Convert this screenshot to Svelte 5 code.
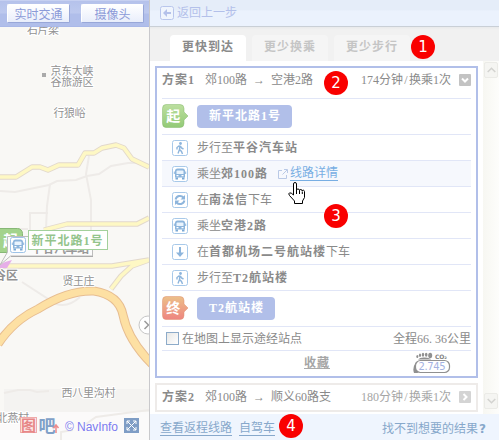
<script>
  const tabs = ['更快到达', '更少换乘', '更少步行'];
  const steps = [
    { icon: 'walk', pre: '步行至', name: '平谷汽车站', post: '' },
    { icon: 'bus', pre: '乘坐', name: '郊100路', post: '', link: '线路详情' },
    { icon: 'change', pre: '在', name: '南法信', post: '下车' },
    { icon: 'bus', pre: '乘坐', name: '空港2路', post: '' },
    { icon: 'down', pre: '在', name: '首都机场二号航站楼', post: '下车' },
    { icon: 'walk', pre: '步行至', name: 'T2航站楼', post: '' }
  ];
  const notes = [
    { n: 1, x: 411, y: 35 },
    { n: 2, x: 324, y: 71 },
    { n: 3, x: 324, y: 204 },
    { n: 4, x: 279, y: 414 }
  ];
</script>

{#snippet bus()}
  <path d="M3 11.500V5q0-2.500 2.500-2.500h5Q13 2.500 13 5v6.500z" fill="#8db5dc" />
  <path d="M4.500 8V5.500q0-1 1-1h5q1 0 1 1V8z" fill="#eaf4fd" />
  <path d="M4.500 9h2v1.300h-2zM9.500 9h2v1.300h-2z" fill="#fff" />
  <path d="M2.300 5.500V8M13.700 5.500V8" stroke="#8db5dc" />
  <path d="M3.500 11.500h2.500v2H3.500zM10 11.500h2.500v2H10z" fill="#7ba9d6" />
{/snippet}

{#snippet badge(label, id, top, bottom, edge)}
  <svg class="badge" width="27" height="24" viewBox="0 0 27 24">
    <defs>
      <linearGradient id={id} x1="0" y1="0" x2="0" y2="1">
        <stop offset="0" stop-color={top} />
        <stop offset="1" stop-color={bottom} />
      </linearGradient>
    </defs>
    <path d="M4 .5h14q4 0 4 4v3.500l4 4-4 4v3.500q0 4-4 4H4q-3.500 0-3.500-4v-15q0-4 3.500-4z" fill="url(#{id})" stroke={edge} stroke-opacity=".5" />
    <text x="11.300" y="17" text-anchor="middle" font-size="14" font-weight="700" fill="#fff">{label}</text>
  </svg>
{/snippet}

<div class="app">
  <section class="left">
    <div class="toolbar">
      <button>实时交通</button>
      <button>摄像头</button>
    </div>
    <svg class="map" width="149" height="413" viewBox="0 27 149 413">
      <rect y="27" width="149" height="413" fill="#f9f8f5" />
      <path d="M4 389h145v23H4z" fill="#f4f3f1" />
      <path d="M0 412h149v28H0z" fill="#fbfafa" />
      <g fill="none" stroke="#eeebe8" stroke-width="2">
        <path d="M0 191l15 1 34-7 8-4 19-1 11-4 12-2 12-8 17-3h8l13 2" />
        <path d="M50 184l-3 22-1 23M89 156l-3 18 5 26v30M30 230v-17h18M0 229h28M22 282l34 22q12 4 24-7" />
        <path d="M4 393l14-3h12l7 2 12-1M61 440v-8l12-2M86 424l10-7 53-7" />
      </g>
      <g fill="none" stroke-linejoin="round">
        <path d="M0 177h16l16-10h8l8 3 11-5h19l7-12h9l8-5 14-3 8 3 8 11 17 8M44 230l23-6h70l12-6M0 266h112l37-6M111 289l10-13 11-10 17-6" stroke="#e2d8cc" stroke-width="5.400" />
        <path d="M0 177h16l16-10h8l8 3 11-5h19l7-12h9l8-5 14-3 8 3 8 11 17 8M44 230l23-6h70l12-6M0 266h112l37-6M111 289l10-13 11-10 17-6" stroke="#fef8c4" stroke-width="3.600" />
        <path d="M-2 344Q14 320 38 309Q68 290 94 291Q119 295 123 315Q128 340 152 364" stroke="#e7bd91" stroke-width="9" />
        <path d="M-2 344Q14 320 38 309Q68 290 94 291Q119 295 123 315Q128 340 152 364" stroke="#fde0a3" stroke-width="7" />
      </g>
      <g class="place">
        <text x="27" y="33.500" textLength="32">石片梁</text>
        <text x="50.500" y="75" textLength="43">京东大峡</text>
        <text x="50.500" y="86" textLength="43">谷旅游区</text>
        <text x="53.500" y="117" textLength="32">行狼峪</text>
        <text x="62.500" y="284.500" textLength="32">贤王庄</text>
        <text x="61.500" y="396.500" textLength="54">西八里沟村</text>
        <text x="-3" y="422" textLength="32">北燕村</text>
        <text x="-6" y="280" font-size="12" font-weight="700" textLength="24">谷区</text>
      </g>
      <rect x="42" y="73" width="4" height="4" fill="#aaa" />
      <rect x="-9.500" y="228.500" width="32" height="24" rx="5" fill="#a3d38c" stroke="#87b876" />
      <text x="3" y="246" font-size="15" font-weight="700" fill="#fff">起</text>
      <path d="M0 265l5-3 7-2-5 8H0z" fill="#e6aee8" />
      <path d="M7.500 236.500h85v19.500h-82L0 265l7.500-13z" fill="#fbfbfb" stroke="#bdbdbd" />
      <path d="M11 256.500h82" stroke="#aaa" />
      <text x="31" y="253" font-size="12" font-weight="700" fill="#999" textLength="58">平谷汽车站</text>
      <rect x="10.500" y="237.500" width="15" height="15" rx="2" fill="#fff" stroke="#9ec3e7" />
      <g transform="translate(10 237)">{@render bus()}</g>
      <rect x="28.500" y="230.500" width="79" height="19" fill="#fff" stroke="#a3d09c" />
      <text x="31.500" y="244.500" font-size="12" font-weight="700" fill="#94c48c" textLength="71">新平北路1号</text>
      <circle cx="148" cy="325" r="9" fill="#fff" stroke="#c6c6c6" />
      <path d="M144.500 321l4 4-4 4" fill="none" stroke="#999" stroke-width="1.500" />
      <rect x="20.500" y="417.500" width="16" height="15" fill="#fbeaea" stroke="#efabab" />
      <text x="21" y="431" font-size="15" font-weight="700" fill="#e78787">图</text>
      <text x="38.500" y="431.500" font-size="17" font-weight="700" fill="#7fa0c8">吧</text>
      <path d="M56 433v-7M53.500 428l2.500-3 2.500 3" stroke="#ee8c8c" stroke-width="1.500" fill="none" />
      <text class="copy" x="65" y="431" textLength="53">© NavInfo</text>
      <rect x="124" y="418" width="15" height="15" fill="#7f9dc5" />
      <path d="M127 421l9 9m0-9l-9 9M127 424v-3h3M133 421h3v3M136 427v3h-3M130 430h-3v-3" fill="none" stroke="#fff" />
    </svg>
  </section>

  <section class="panel">
    <header>
      <svg width="14" height="14" viewBox="0 0 14 14">
        <rect x=".5" y=".5" width="13" height="13" rx="2" fill="#f0f5fd" stroke="#b9c6ec" />
        <path d="M3 7l4-4v3h4v2H7v3z" fill="#b4c1ea" />
      </svg>
      <span>返回上一步</span>
    </header>
    <nav>
      {#each tabs as tab, i}
        <div class="tab" class:active={i === 0}>{tab}</div>
      {/each}
    </nav>

    <div class="content">
      <div class="plans">
        <article class="plan open">
          <div class="title">
            <b>方案1</b><span>郊100路<i class="to">→</i>空港2路</span>
            <span class="time">174分钟<i>/</i>换乘1次</span>
            <svg width="12" height="12" viewBox="0 0 12 12">
              <rect width="12" height="12" rx="1" fill="#c3c3c3" />
              <path d="M3 4.500l3 3 3-3" fill="none" stroke="#fff" stroke-width="2" />
            </svg>
          </div>
          <div class="end">
            {@render badge('起', 'start', '#bcdf9f', '#93ca77', '#86b96c')}
            <div class="pill">新平北路1号</div>
          </div>
          {#each steps as s}
            <div class="step" class:hover={s.link}>
              <svg width="16" height="16" viewBox="0 0 16 16">
                <rect x=".5" y=".5" width="15" height="15" rx="2" fill="#fff" stroke="#a8c9e9" />
                {#if s.icon === 'bus'}
                  {@render bus()}
                {:else if s.icon === 'walk'}
                  <circle cx="8.500" cy="3.500" r="1.400" fill="#8db5dc" />
                  <path d="M8 5.500L7.500 9.500L9.500 11.500L10.500 14M7.500 9.500L6 13.500M7.500 5.500L5 7.500V9.500M8.500 6L9.500 8L11.500 9" fill="none" stroke="#8db5dc" stroke-width="1.400" />
                {:else if s.icon === 'down'}
                  <path d="M8 3v6" stroke="#8db5dc" stroke-width="2" />
                  <path d="M4 8.500h8L8 13z" fill="#8db5dc" />
                {:else}
                  <path d="M3.600 7.500a4.500 4.500 0 0 1 7.800-2M12.400 8.500a4.500 4.500 0 0 1-7.800 2" fill="none" stroke="#8db5dc" stroke-width="2" />
                  <path d="M13 3v4.500H8.500zM3 13V8.500h4.500z" fill="#8db5dc" />
                {/if}
              </svg>
              <span class="txt">{s.pre}<b>{s.name}</b>{s.post}</span>
              {#if s.link}
                <svg class="ext" width="10" height="10" viewBox="0 0 10 10">
                  <path d="M4 1.500H.500v8h8V6M6 .500h3.500V4M9 1L4.500 5.500" fill="none" stroke="#b9c9e6" />
                </svg>
                <a href="#detail">{s.link}</a>
              {/if}
            </div>
          {/each}
          <div class="end">
            {@render badge('终', 'finish', '#ecc089', '#ee8580', '#e0906f')}
            <div class="pill">T2航站楼</div>
          </div>
          <div class="show">
            <span class="box"></span><span>在地图上显示途经站点</span>
            <span class="total">全程66<i class="dot">.</i>36公里</span>
          </div>
          <div class="fav">
            <b>收藏</b>
            <svg width="38" height="23" viewBox="0 0 38 23">
              <path d="M5 7.500Q7 5 12 5.500T18 7.500z" fill="#909090" />
              <ellipse cx="4.300" cy="4.500" rx="1" ry="1.500" fill="#909090" />
              <ellipse cx="7" cy="3.200" rx="1.100" ry="1.800" fill="#909090" />
              <ellipse cx="10" cy="2.700" rx="1.200" ry="2" fill="#909090" />
              <ellipse cx="13.200" cy="2.700" rx="1.300" ry="2" fill="#909090" />
              <ellipse cx="17.200" cy="3.500" rx="2" ry="2.800" fill="#909090" />
              <path d="M3 10Q-1 16 1 21h4z" fill="#909090" />
              <rect x="2.500" y="8.500" width="34" height="12" rx="5" fill="#fff" stroke="#909090" stroke-width="1.200" />
              <text x="22" y="6.800" class="co" textLength="12">CO₂</text>
              <text x="5.500" y="18.300" class="val" textLength="27">2.745</text>
            </svg>
          </div>
        </article>

        <article class="plan shut">
          <div class="title">
            <b>方案2</b><span>郊100路<i class="to">→</i>顺义60路支</span>
            <span class="time">180分钟<i>/</i>换乘1次</span>
            <svg width="12" height="12" viewBox="0 0 12 12">
              <rect width="12" height="12" rx="1" fill="#d4d4d4" />
              <path d="M4.500 3l3 3-3 3" fill="none" stroke="#fff" stroke-width="2" />
            </svg>
          </div>
        </article>
      </div>
      <div class="scroll">
        <div class="arrow"><svg width="9" height="6" viewBox="0 0 9 6"><path d="M.700 5l3.800-3.800L8.300 5" /></svg></div>
        <div class="arrow"><svg width="9" height="6" viewBox="0 0 9 6"><path d="M.700 1l3.800 3.800L8.300 1" /></svg></div>
      </div>
    </div>

    <footer>
      <a href="#back">查看返程线路</a>
      <a href="#drive">自驾车</a>
      <span>找不到想要的结果<b class="ask">?</b></span>
    </footer>
  </section>

  {#each notes as m}
    <div class="note" style="left:{m.x}px;top:{m.y}px">{m.n}</div>
  {/each}
  <svg class="hand" width="18" height="23" viewBox="0 0 18 23">
    <path d="M5.500 13V2q0-1.500 1.500-1.500T8.500 2v6q0-1 1.500-1t1.500 1.500q0-1 1.300-1t1.400 1.500q.3-1 1.200-.8t1.100 1.300v6l-2 3.500v2.500h-8V19L1.500 13.500q-1.500-2 0-2.600T5.500 13z" fill="#fff" stroke="#000" />
    <path d="M8.500 8v4M11.500 8.500V12M14.300 9.500V12" stroke="#000" />
  </svg>
</div>

<style>
  .app {
    position: relative;
    display: flex;
    width: 499px;
    height: 440px;
    overflow: hidden;
    background: #fff;
    color: #8a8a8a;
    font: 12px/16px 'Liberation Serif', 'Noto Sans CJK SC', sans-serif;
  }
  .app b { font-weight: 700; letter-spacing: 1px; }
  i { display: inline-block; width: 6px; text-align: center; font-style: normal; }
  i.to { width: 24px; }
  i.dot { text-align: left; }
  svg { display: block; flex: none; }
  .left {
    width: 149px;
    flex: none;
    border-right: 1px solid #c9c9cc;
  }
  .toolbar {
    box-sizing: border-box;
    height: 27px;
    padding: 3px 0 0 7px;
    display: flex;
    gap: 11px;
    background: linear-gradient(#b5c2eb, #bdc9ee 48%, #b0beea 52%, #b0beea);
    border-top: 1px solid #c6d0f1;
    border-bottom: 1px solid #a9b8e8;
  }
  button {
    box-sizing: border-box;
    width: 63px;
    height: 19px;
    padding: 0;
    border: 1px solid #fff;
    border-right-color: #98a7d8;
    border-bottom-color: #98a7d8;
    border-radius: 2px;
    background: linear-gradient(#fff, #e9eefb);
    color: #8b9ad8;
    font: 12px/16px 'Noto Sans CJK SC', sans-serif;
  }
  .map { font-family: 'Liberation Serif', 'Noto Sans CJK SC', sans-serif; }
  .place text {
    fill: #929292;
    stroke: #fff;
    stroke-width: 2px;
    paint-order: stroke;
  }
  .place { font-size: 11px; }
  .copy { font: 12px 'Liberation Sans', sans-serif; fill: #7c7cf0; }
  .panel { width: 349px; display: flex; flex-direction: column; }
  header {
    box-sizing: border-box;
    height: 27px;
    padding: 0 0 1px 10px;
    display: flex;
    align-items: center;
    gap: 3px;
    color: #b3c0ea;
    background: linear-gradient(#e5edf9, #e5edf9 38%, #ebf2fd 42%, #ebf2fd);
    border-bottom: 1px solid #c9cfd6;
  }
  nav {
    box-sizing: border-box;
    height: 34px;
    padding: 8px 0 0 20px;
    display: flex;
    gap: 6px;
    background: linear-gradient(#e9eaeb, #f1f1f1 3px);
  }
  .tab {
    width: 76px;
    height: 26px;
    box-sizing: border-box;
    padding-left: 12px;
    border-radius: 4px 4px 0 0;
    background: #f5f5f5;
    color: #c5c5c5;
    font-weight: 700;
    letter-spacing: 1px;
    line-height: 24px;
    white-space: nowrap;
  }
  .tab.active { background: #fff; color: #8a8a8a; }
  .content { height: 353px; display: flex; justify-content: space-between; }
  .plans { padding: 5px 0 0 5px; width: 323px; }
  .plan { box-sizing: border-box; width: 323px; padding: 0 5px; white-space: nowrap; }
  .open { height: 312px; border: 2px solid #b1bfe9; }
  .shut { height: 29px; margin-top: 5px; border: 2px solid #eeebe9; }
  .title { display: flex; align-items: center; height: 24px; }
  .open .title { padding-bottom: 6px; }
  .title b { width: 43px; }
  .time { margin-left: auto; margin-right: 8px; }
  .shut .time { color: #a6a6a6; }
  .open > div { border-bottom: 1px solid #e1e6f7; }
  .open > .fav { border: 0; }
  .end { display: flex; height: 35px; align-items: center; }
  .badge { margin: 0 8px 2px 0; }
  .badge text { font-family: 'Noto Sans CJK SC', sans-serif; }
  .pill {
    height: 23px;
    padding: 0 11px 0 12px;
    border-radius: 4px;
    background: #b1bfe9;
    color: #fff;
    font-weight: 700;
    letter-spacing: 1px;
    line-height: 22px;
  }
  .step { display: flex; align-items: center; height: 25px; padding-left: 10px; }
  .step.hover { background: #f6f8fd; }
  .txt { margin-left: 9px; }
  .ext { margin: 0 2px 0 10px; }
  .step a { color: #78aee3; text-decoration: none; border-bottom: 1px solid; line-height: 14px; }
  .show { display: flex; align-items: center; height: 23px; padding-left: 4px; }
  .box {
    box-sizing: border-box;
    width: 13px;
    height: 13px;
    margin-right: 3px;
    border: 1px solid #8dabc9;
    background: linear-gradient(135deg, #e8e8e6, #fff);
  }
  .total { margin-left: auto; }
  .fav { display: flex; height: 25px; padding-left: 142px; }
  .fav b { height: 17px; line-height: 24px; color: #a5a5a5; border-bottom: 1px solid #aaa; }
  .fav svg { margin: 1px 0 0 83px; }
  .co { font: 700 6px 'DejaVu Sans', sans-serif; fill: #808080; }
  .val { font: 10px 'DejaVu Sans', sans-serif; fill: #a3b2e2; }
  .scroll {
    width: 16px;
    display: flex;
    flex-direction: column;
    justify-content: space-between;
    box-sizing: border-box;
    padding: 1px 1px 5px;
    background: linear-gradient(90deg, #f7f7f2, #fdfdfb);
  }
  .arrow {
    box-sizing: border-box;
    width: 14px;
    height: 16px;
    display: flex;
    align-items: center;
    justify-content: center;
    border: 1px solid #ebebe7;
    border-radius: 2px;
    background: #f5f5f2;
  }
  .arrow path { fill: none; stroke: #d3d3d0; stroke-width: 1.5; }
  footer {
    box-sizing: border-box;
    height: 26px;
    padding: 0 11px 0 10px;
    display: flex;
    align-items: center;
    gap: 7px;
    background: #eff5fe;
    color: #87a8cb;
  }
  footer a { color: inherit; text-decoration: none; border-bottom: 1px solid; line-height: 13px; margin-top: 3px; }
  footer span { margin: 3px 0 0 auto; }
  .ask { display: inline-block; width: 10px; text-align: center; font-family: 'DejaVu Sans', sans-serif; }
  .note {
    position: absolute;
    width: 24px;
    height: 24px;
    border-radius: 12px;
    background: #f90000;
    color: #fff;
    font: 15px/24px 'DejaVu Sans', sans-serif;
    text-align: center;
  }
  .hand { position: absolute; left: 288px; top: 182px; }
</style>
